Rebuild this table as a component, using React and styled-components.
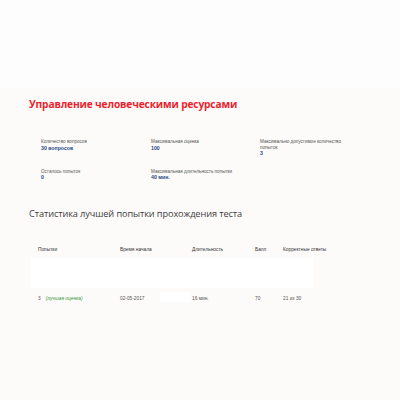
import React from "react";
import styled, { createGlobalStyle } from "styled-components";

const Global = createGlobalStyle`
  html, body { margin: 0; padding: 0; background: #fdfdfd; }
  body { font-family: "Open Sans", "Noto Sans", sans-serif; }
`;

const Page = styled.div`
  width: 400px;
  height: 400px;
  display: flex;
  flex-direction: column;
  background: #fdfdfd;
`;

const Header = styled.div`
  height: 88px;
  background: #fdfdfd;
`;

const Main = styled.div`
  flex: 1;
  background: #fcfbfa;
  padding: 7px 0 0 29px;
  display: flex;
  flex-direction: column;
`;

const Title = styled.h1`
  margin: 0;
  font-family: "Open Sans", sans-serif;
  font-weight: 700;
  font-size: 10.2px;
  line-height: 18px;
  color: #ec1f2e;
  letter-spacing: -0.15px;
`;

const InfoGrid = styled.div`
  display: grid;
  grid-template-columns: 110px 109px 90px;
  row-gap: 12px;
  margin: 26px 0 0 12px;
`;

const Info = styled.div`
  display: flex;
  flex-direction: column;
`;

const Label = styled.span`
  font-family: "Liberation Sans", sans-serif;
  font-size: 4.6px;
  line-height: 5.6px;
  color: #555;
`;

const Value = styled.span`
  font-family: "Liberation Sans", sans-serif;
  font-size: 5.2px;
  line-height: 6.4px;
  font-weight: 700;
  color: #2a4a88;
`;

const Subtitle = styled.h2`
  margin: 26px 0 0 0;
  font-family: "Open Sans", sans-serif;
  font-weight: 400;
  font-size: 9.2px;
  line-height: 14px;
  color: #3d3d3d;
  letter-spacing: -0.1px;
`;

const Table = styled.div`
  margin: 21px 0 0 2px;
  width: 282px;
  display: flex;
  flex-direction: column;
`;

const Row = styled.div`
  display: grid;
  grid-template-columns: 82px 72px 63px 28px 1fr;
  padding-left: 7px;
  align-items: center;
  height: ${(p) => p.$h}px;
  font-family: "Liberation Sans", sans-serif;
  font-size: 4.8px;
  color: ${(p) => (p.$head ? "#333" : "#555")};
`;

const Blank = styled.div`
  height: 30px;
  background: #ffffff;
`;

const Cell = styled.span`
  white-space: nowrap;
  position: relative;
`;

const Best = styled.span`
  color: #3a9a3a;
  font-style: italic;
  margin-left: 5px;
`;

const Patch = styled.span`
  position: absolute;
  left: 40px;
  top: -4px;
  width: 30px;
  height: 10px;
  background: #ffffff;
`;

const stats = [
  ["Количество вопросов", "30 вопросов"],
  ["Максимальная оценка", "100"],
  ["Максимально допустимое количество попыток", "3"],
  ["Осталось попыток", "0"],
  ["Максимальная длительность попытки", "40 мин."],
];

export default function App() {
  return (
    <>
      <Global />
      <Page>
        <Header />
        <Main>
          <Title>Управление человеческими ресурсами</Title>
          <InfoGrid>
            {stats.map(([l, v]) => (
              <Info key={l}>
                <Label>{l}</Label>
                <Value>{v}</Value>
              </Info>
            ))}
          </InfoGrid>
          <Subtitle>Статистика лучшей попытки прохождения теста</Subtitle>
          <Table>
            <Row $head $h={16}>
              <Cell>Попытки</Cell>
              <Cell>Время начала</Cell>
              <Cell>Длительность</Cell>
              <Cell>Балл</Cell>
              <Cell>Корректные ответы</Cell>
            </Row>
            <Blank />
            <Row $h={22}>
              <Cell>
                3<Best>(лучшая оценка)</Best>
              </Cell>
              <Cell>
                02-05-2017
                <Patch />
              </Cell>
              <Cell>16 мин.</Cell>
              <Cell>70</Cell>
              <Cell>21 из 30</Cell>
            </Row>
          </Table>
        </Main>
      </Page>
    </>
  );
}
